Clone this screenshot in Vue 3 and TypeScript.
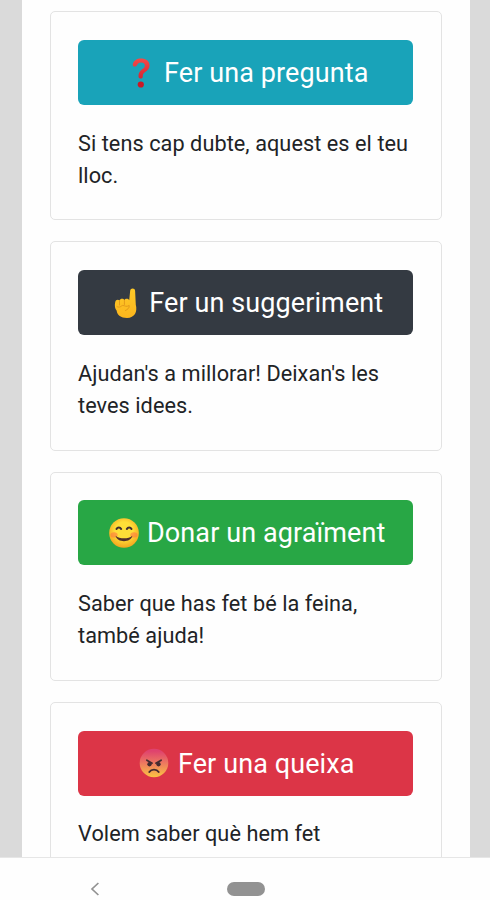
<script setup lang="ts">
type Icon = 'question' | 'finger' | 'smile' | 'angry'

interface Option {
  icon: Icon
  tone: string
  label: string
  lines: string[]
}

const options: Option[] = [
  { icon: 'question', tone: 'info', label: 'Fer una pregunta', lines: ['Si tens cap dubte, aquest es el teu', 'lloc.'] },
  { icon: 'finger', tone: 'dark', label: 'Fer un suggeriment', lines: ["Ajudan's a millorar! Deixan's les", 'teves idees.'] },
  { icon: 'smile', tone: 'success', label: 'Donar un agraïment', lines: ['Saber que has fet bé la feina,', 'també ajuda!'] },
  { icon: 'angry', tone: 'danger', label: 'Fer una queixa', lines: ['Volem saber què hem fet'] },
]
</script>

<template>
  <div class="screen">
    <main class="page">
      <section v-for="option in options" :key="option.icon" class="card">
        <button type="button" class="action" :class="option.tone">
          <svg v-if="option.icon === 'question'" class="emoji" viewBox="0 0 32 32" aria-hidden="true">
            <defs>
              <linearGradient id="redMark" x1="0" y1="0" x2="0" y2="1">
                <stop offset="0" stop-color="#f44a47" />
                <stop offset="1" stop-color="#d32635" />
              </linearGradient>
            </defs>
            <path d="M7.8 6.9C8.8 3.5 12 1.5 15.8 1.5C20.8 1.5 24.6 4.2 24.6 8.2C24.6 11.4 22.6 13.3 20.2 15C18.2 16.4 17.8 17.4 17.8 19.5C17.8 22.2 13.6 22.2 13.5 19.4C13.3 16.5 14.6 14.4 16.8 12.6C18.8 11 19.8 10.1 19.8 8.4C19.8 6.6 18.3 5.5 16 5.5C13.8 5.5 12.9 6.5 12 8.2C10.8 10.5 7 9.6 7.8 6.9Z" fill="url(#redMark)" />
            <circle cx="15.8" cy="27.5" r="3.1" fill="#c91826" />
          </svg>
          <svg v-else-if="option.icon === 'finger'" class="emoji" viewBox="0 0 32 32" aria-hidden="true">
            <defs>
              <linearGradient id="hand" x1="0" y1="0" x2="0" y2="1">
                <stop offset="0" stop-color="#ffca28" />
                <stop offset="1" stop-color="#fbb51d" />
              </linearGradient>
            </defs>
            <path d="M20.2 3.6C20.5 .6 25 .7 25.1 3.8L25.8 17.8C27.6 24.8 24.8 31 17 31C10.8 31 7.3 28.5 6.6 23.6C5 22 4.4 18.4 5.2 15.3C5.7 12.8 8.1 12.2 9.5 13.6C10.1 11.3 13.4 11 14.4 13C15.2 11.4 18.2 11.3 19.2 13.2Z" fill="url(#hand)" />
            <path d="M9.5 14V18M14.4 13.4V17.5M7 19.6C9.8 21.4 11.1 18.6 12.8 18.5C14.8 18.4 16 20.4 19.2 18.5C19.7 21 17.3 22.7 15.4 23.5" fill="none" stroke="#e39a1a" stroke-width="1" stroke-linecap="round" />
          </svg>
          <svg v-else-if="option.icon === 'smile'" class="emoji" viewBox="-0.4 -0.4 32.8 32.8" aria-hidden="true">
            <defs>
              <radialGradient id="sunny" cx=".5" cy=".42" r=".58">
                <stop offset=".5" stop-color="#fedf38" />
                <stop offset="1" stop-color="#f3a51e" />
              </radialGradient>
            </defs>
            <circle cx="16" cy="16" r="15.2" fill="url(#sunny)" />
            <ellipse cx="5.8" cy="18" rx="3.7" ry="2.7" fill="#ff7043" opacity=".55" />
            <ellipse cx="26.2" cy="18" rx="3.7" ry="2.7" fill="#ff7043" opacity=".55" />
            <path d="M8.3 11.8C9.4 9.9 12 9.9 13.1 11.8M18.9 11.8C20 9.9 22.6 9.9 23.7 11.8" fill="none" stroke="#402e32" stroke-width="2.1" stroke-linecap="round" />
            <path d="M7.4 18.8C11.5 22.4 20.5 22.4 24.6 18.8C23.3 26.2 8.7 26.2 7.4 18.8Z" fill="#51302b" />
          </svg>
          <svg v-else class="emoji" viewBox="-1 -1 34 34" aria-hidden="true">
            <defs>
              <linearGradient id="fury" x1="0" y1="0" x2="0" y2="1">
                <stop offset=".08" stop-color="#df426e" />
                <stop offset=".5" stop-color="#ed7860" />
                <stop offset="1" stop-color="#fbc442" />
              </linearGradient>
            </defs>
            <circle cx="16" cy="16" r="15.2" fill="url(#fury)" />
            <path d="M8.4 13L14 16.2M23.6 13L18 16.2" stroke="#442b30" stroke-width="1.8" stroke-linecap="round" />
            <circle cx="11.2" cy="17.3" r="2.3" fill="#442b30" />
            <circle cx="20.8" cy="17.3" r="2.3" fill="#442b30" />
            <path d="M11 25.5C13.2 22.3 18.8 22.3 21 25.5" fill="none" stroke="#442b30" stroke-width="2" stroke-linecap="round" />
          </svg>
          <span class="label">{{ option.label }}</span>
        </button>
        <p class="text">
          <span v-for="line in option.lines" :key="line" class="line">{{ line }}</span>
        </p>
      </section>
    </main>
    <nav class="navbar">
      <svg class="back" viewBox="0 0 10 14" aria-hidden="true">
        <path d="M8.4 1L2 7L8.4 13" fill="none" stroke="#929292" stroke-width="1.7" />
      </svg>
      <span class="home"></span>
    </nav>
  </div>
</template>

<style>
body {
  margin: 0;
}
</style>

<style scoped>
.screen {
  box-sizing: border-box;
  width: 490px;
  height: 900px;
  overflow: hidden;
  display: flex;
  flex-direction: column;
  background: #dadada;
  font-family: Roboto, "Liberation Sans", sans-serif;
}
.page {
  box-sizing: border-box;
  height: 857px;
  flex: none;
  margin: 0 20.5px 0 22px;
  padding: 11.3px 28px 0;
  overflow: hidden;
  display: flex;
  flex-direction: column;
  gap: 21px;
  background: #fefefe;
}
.card {
  box-sizing: border-box;
  flex: none;
  height: 209.2px;
  padding: 27.8px 27.5px 0 27px;
  border: 1.4px solid #e3e3e3;
  border-radius: 5px;
}
.action {
  box-sizing: border-box;
  width: 100%;
  height: 65px;
  padding: 0 0 0 2px;
  border: 0;
  border-radius: 6px;
  display: flex;
  align-items: center;
  justify-content: center;
  gap: 7.5px;
  color: #fff;
  font: 400 27px/40px Roboto, "Liberation Sans", sans-serif;
  letter-spacing: 0.1px;
  white-space: nowrap;
}
.label {
  padding-top: 1px;
}
.info { background: #19a3b9; }
.dark { background: #343a42; }
.success { background: #28a745; }
.danger { background: #dc3547; }
.emoji {
  width: 32px;
  height: 32px;
  flex: none;
}
.text {
  margin: 22.5px 0 0;
  color: #212326;
  font-size: 21.7px;
  line-height: 32.5px;
  letter-spacing: 0.06px;
}
.line {
  display: block;
  white-space: nowrap;
}
.navbar {
  box-sizing: border-box;
  flex: 1;
  padding: 20px 0 0 90px;
  border-top: 1px solid #e6e6e6;
  display: flex;
  align-items: center;
  gap: 127px;
  background: #fefefe;
}
.back {
  width: 10px;
  height: 14px;
}
.home {
  width: 38px;
  height: 14px;
  border-radius: 7px;
  background: #929292;
}
</style>
